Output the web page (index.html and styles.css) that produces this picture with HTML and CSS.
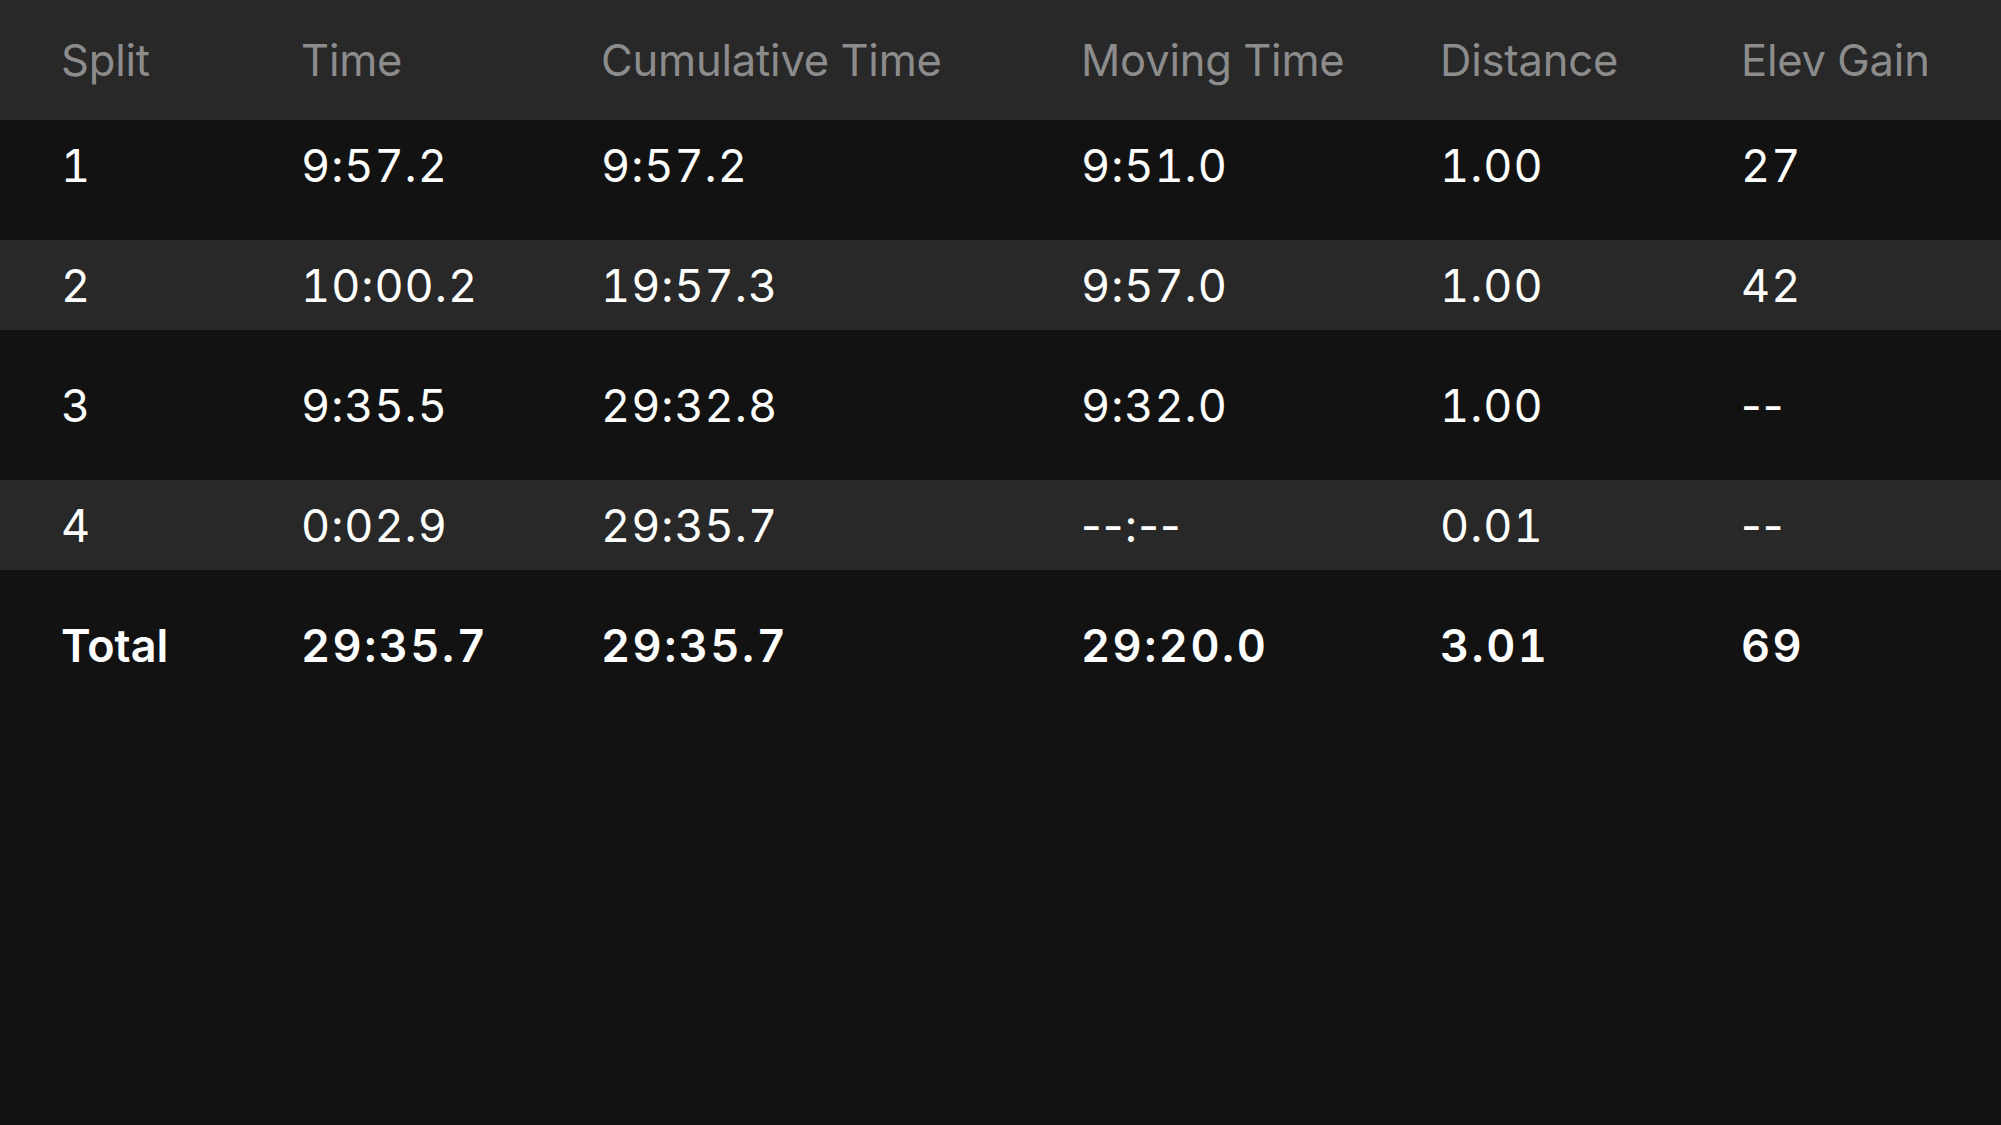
FILE: index.html
```html
<!DOCTYPE html>
<html lang="en">
<head>
    <meta charset="UTF-8">
    <meta name="viewport" content="width=device-width, initial-scale=1.0">
    <title>Splits</title>
    <link rel="stylesheet" href="styles.css">
</head>
<body>
    <!-- Splits table -->
    <div class="splits">
        <div class="splits-row splits-head">
            <div>Split</div>
            <div>Time</div>
            <div>Cumulative Time</div>
            <div>Moving Time</div>
            <div>Distance</div>
            <div>Elev Gain</div>
        </div>

        <div class="splits-row">
            <div>1</div>
            <div>9:57.2</div>
            <div>9:57.2</div>
            <div>9:51.0</div>
            <div>1.00</div>
            <div>27</div>
        </div>

        <div class="splits-row striped">
            <div>2</div>
            <div>10:00.2</div>
            <div>19:57.3</div>
            <div>9:57.0</div>
            <div>1.00</div>
            <div>42</div>
        </div>

        <div class="splits-row">
            <div>3</div>
            <div>9:35.5</div>
            <div>29:32.8</div>
            <div>9:32.0</div>
            <div>1.00</div>
            <div class="empty">--</div>
        </div>

        <div class="splits-row striped">
            <div>4</div>
            <div>0:02.9</div>
            <div>29:35.7</div>
            <div class="empty">--:--</div>
            <div>0.01</div>
            <div class="empty">--</div>
        </div>

        <div class="splits-row splits-total">
            <div class="total-label">Total</div>
            <div>29:35.7</div>
            <div>29:35.7</div>
            <div>29:20.0</div>
            <div>3.01</div>
            <div>69</div>
        </div>
    </div>
</body>
</html>
```

FILE: styles.css
```css
* {
    margin: 0;
    padding: 0;
    box-sizing: border-box;
}

body {
    min-height: 100vh;
    background: #121212;
    color: #ffffff;
    font-family: Inter, 'Noto Sans', sans-serif;
}

.splits {
    width: 100%;
}

/* Each row shares the same column grid */
.splits-row {
    display: grid;
    grid-template-columns: 240px 300px 480px 359px 301px 1fr;
    align-items: center;
    height: 90px;
    margin-bottom: 30px;
    padding-left: 61px;
    font-size: 45px;
    font-weight: 400;
    font-variant-numeric: tabular-nums;
    letter-spacing: 1px;
}

.splits-head {
    height: 120px;
    margin-bottom: 0;
    background: #282828;
    color: #8c8c8c;
    font-size: 43.5px;
    letter-spacing: -0.2px;
}

.striped {
    background: #282828;
}

.empty {
    font-variant-numeric: normal;
    letter-spacing: 1px;
}

.splits-total {
    font-weight: 600;
    letter-spacing: 2.5px;
}

.total-label {
    letter-spacing: 0;
}
```
